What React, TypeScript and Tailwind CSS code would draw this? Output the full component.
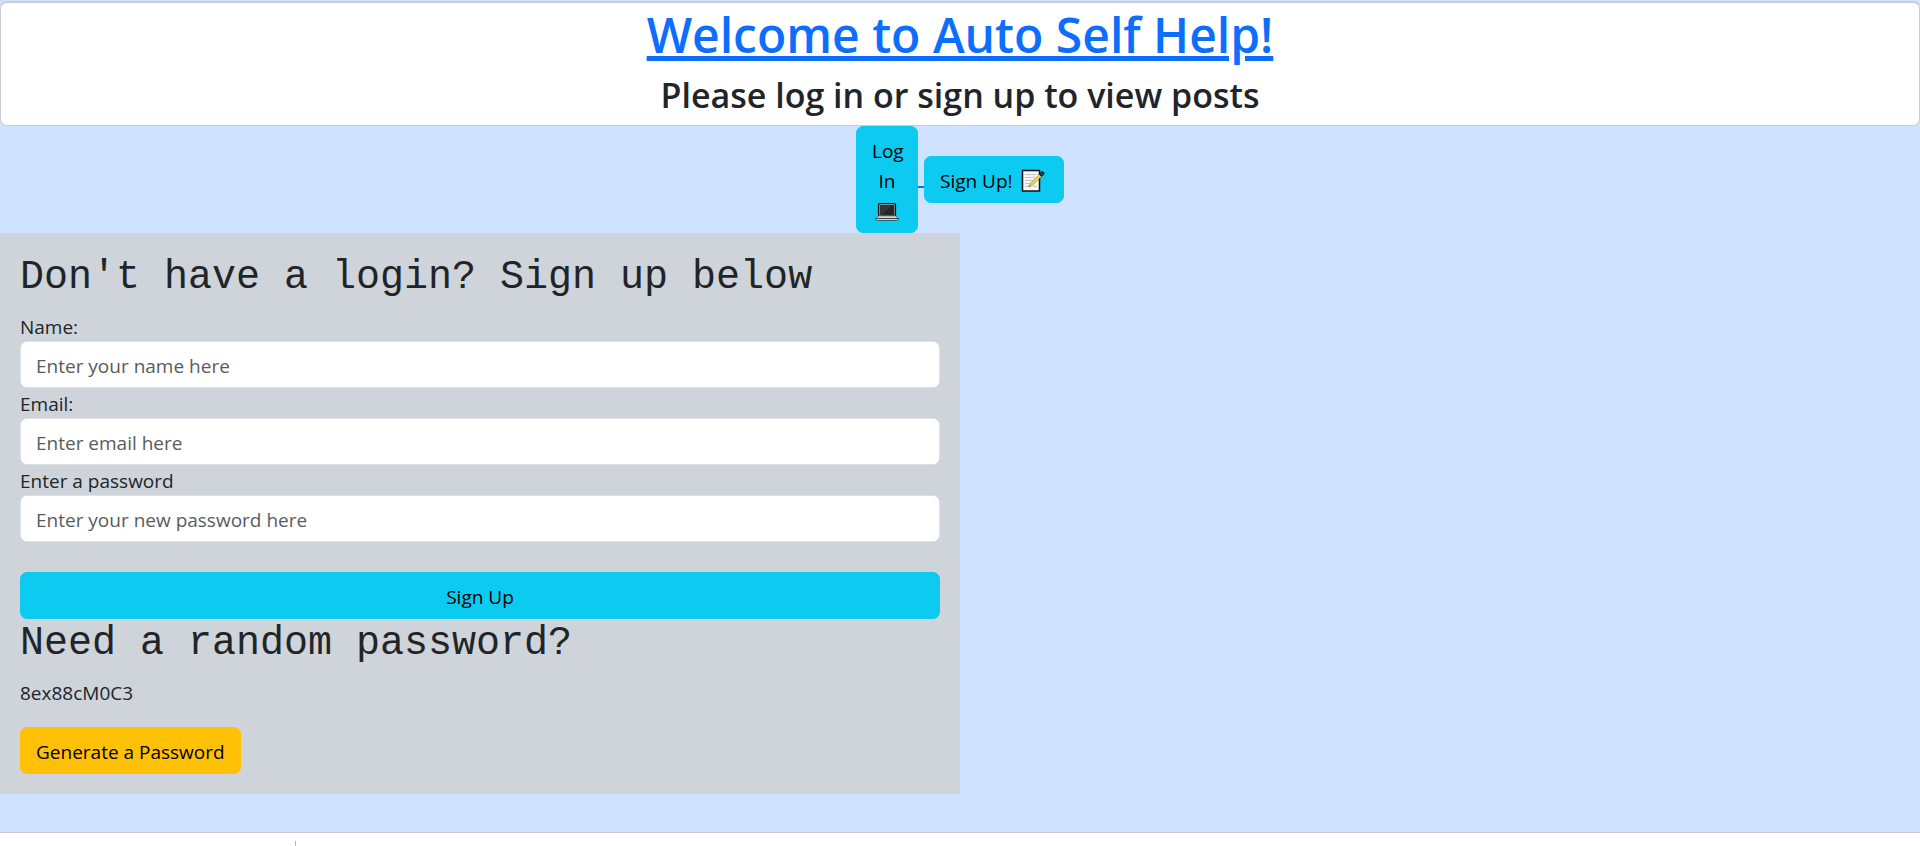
import type { ReactNode } from "react";

function LaptopIcon() {
  return (
    <svg viewBox="0 0 26 22" className="inline-block h-[22px] w-[26px]" role="img" aria-label="laptop">
      <rect x="4.5" y="1.5" width="17" height="12.5" rx="1.2" fill="#8b8f94" stroke="#111" strokeWidth="1.2" />
      <rect x="6" y="3" width="14" height="10" fill="#242629" />
      <path d="M6 3h12L8 13H6z" fill="#33363a" />
      <path d="M4.5 13.800h17l2.800 3H1.700z" fill="#d0d2d5" stroke="#333" strokeWidth=".6" />
      <path d="M1.700 16.500h22.600v.8c0 .6-.5 1-1.200 1H2.900c-.7 0-1.200-.4-1.200-1z" fill="#eceef0" stroke="#111" strokeWidth=".7" />
    </svg>
  );
}

function MemoIcon() {
  return (
    <svg viewBox="0 0 24 26" className="inline-block h-[26px] w-[24px]" role="img" aria-label="memo">
      <path d="M1.500 2.500h17v20.500H1.500z" fill="#f6f6f6" stroke="#111" strokeWidth="1.500" />
      <path d="M4 6.500h11M4 9.500h10M4 12.500h8M4 15.500h5M4 18.500h4M12 18.500h4" stroke="#c3c5c8" strokeWidth="1" />
      <path d="M7.800 18.800l1.200-3.100L19 5.500l2.200 2.100L11 17.700z" fill="#f0d257" stroke="#8a7420" strokeWidth=".5" />
      <path d="M7.800 18.800l.6-1.600.9.900z" fill="#333" />
      <path d="M18.200 6.200l1.700-1.900c.8-.8 2-.9 2.700-.1.700.7.600 1.700-.2 2.500l-1.900 1.800z" fill="#333" stroke="#111" strokeWidth=".9" />
    </svg>
  );
}

const buttonBase =
  "rounded-[7px] border px-[15px] pt-[9px] pb-1.5 text-center text-[19px] leading-[30px] text-black";

const monoHeading = "mb-2.5 pt-0.5 font-['Liberation_Mono',monospace] text-[40px] leading-[46px]";

function Field({ id, label, type, placeholder }: { id: string; label: ReactNode; type: string; placeholder: string }) {
  return (
    <div>
      <label htmlFor={id} className="block pt-0.5 text-[19px] leading-[28px]">
        {label}
      </label>
      <input
        id={id}
        type={type}
        placeholder={placeholder}
        className="block h-[47px] w-full rounded-[7px] border border-[#dee2e6] bg-white px-[15px] pt-0.5 text-[19px] text-[#212529] placeholder:text-[#595c5f]"
      />
    </div>
  );
}

export default function App() {
  return (
    <div className="flex min-h-screen flex-col bg-[#cfe2ff] pt-px font-['Open_Sans','Noto_Sans',sans-serif] text-[#212529]">
      <header className="rounded-[7px] border border-t-2 border-[#c9ccd1] bg-white text-center">
        <h1 className="mb-2 pt-0.5 text-[48px] leading-[60px] font-semibold">
          <a href="#" className="text-[#0d6efd] underline decoration-[5px] underline-offset-[3px]">
            Welcome to Auto Self Help!
          </a>
        </h1>
        <h2 className="mb-2.5 pt-0.5 text-[34px] leading-[40px] font-semibold">Please log in or sign up to view posts</h2>
      </header>

      <nav className="flex items-center justify-center">
        <a href="#login" className={`${buttonBase} w-[62px] border-[#0dcaf0] bg-[#0dcaf0]`}>
          Log In <LaptopIcon />
        </a>
        <span aria-hidden="true" className="h-[17px] w-1.5 border-b-2 border-[#0d6efd]" />
        <a href="#signup" className={`${buttonBase} flex w-[140px] items-center gap-2 border-[#0dcaf0] bg-[#0dcaf0]`}>
          Sign Up! <MemoIcon />
        </a>
      </nav>

      <main className="w-1/2 bg-[#ced4da] p-5">
        <form onSubmit={(event) => event.preventDefault()}>
          <h2 className={monoHeading}>Don't have a login? Sign up below</h2>
          <Field id="name" label="Name:" type="text" placeholder="Enter your name here" />
          <Field id="email" label="Email:" type="email" placeholder="Enter email here" />
          <Field id="password" label="Enter a password" type="password" placeholder="Enter your new password here" />
          <button type="submit" className={`${buttonBase} mt-[30px] block w-full border-[#0dcaf0] bg-[#0dcaf0]`}>
            Sign Up
          </button>
        </form>
        <h2 className={monoHeading}>Need a random password?</h2>
        <p className="mb-5 pt-0.5 text-[19px] leading-[28px]">8ex88cM0C3</p>
        <button type="button" className={`${buttonBase} block border-[#ffc107] bg-[#ffc107]`}>
          Generate a Password
        </button>
      </main>

      <footer className="mt-[38px] grow border-t border-[#c9ccd1] bg-white pt-2">
        <div className="ml-[295px] h-[5px] border-l border-[#b5b8bc]" />
      </footer>
    </div>
  );
}
